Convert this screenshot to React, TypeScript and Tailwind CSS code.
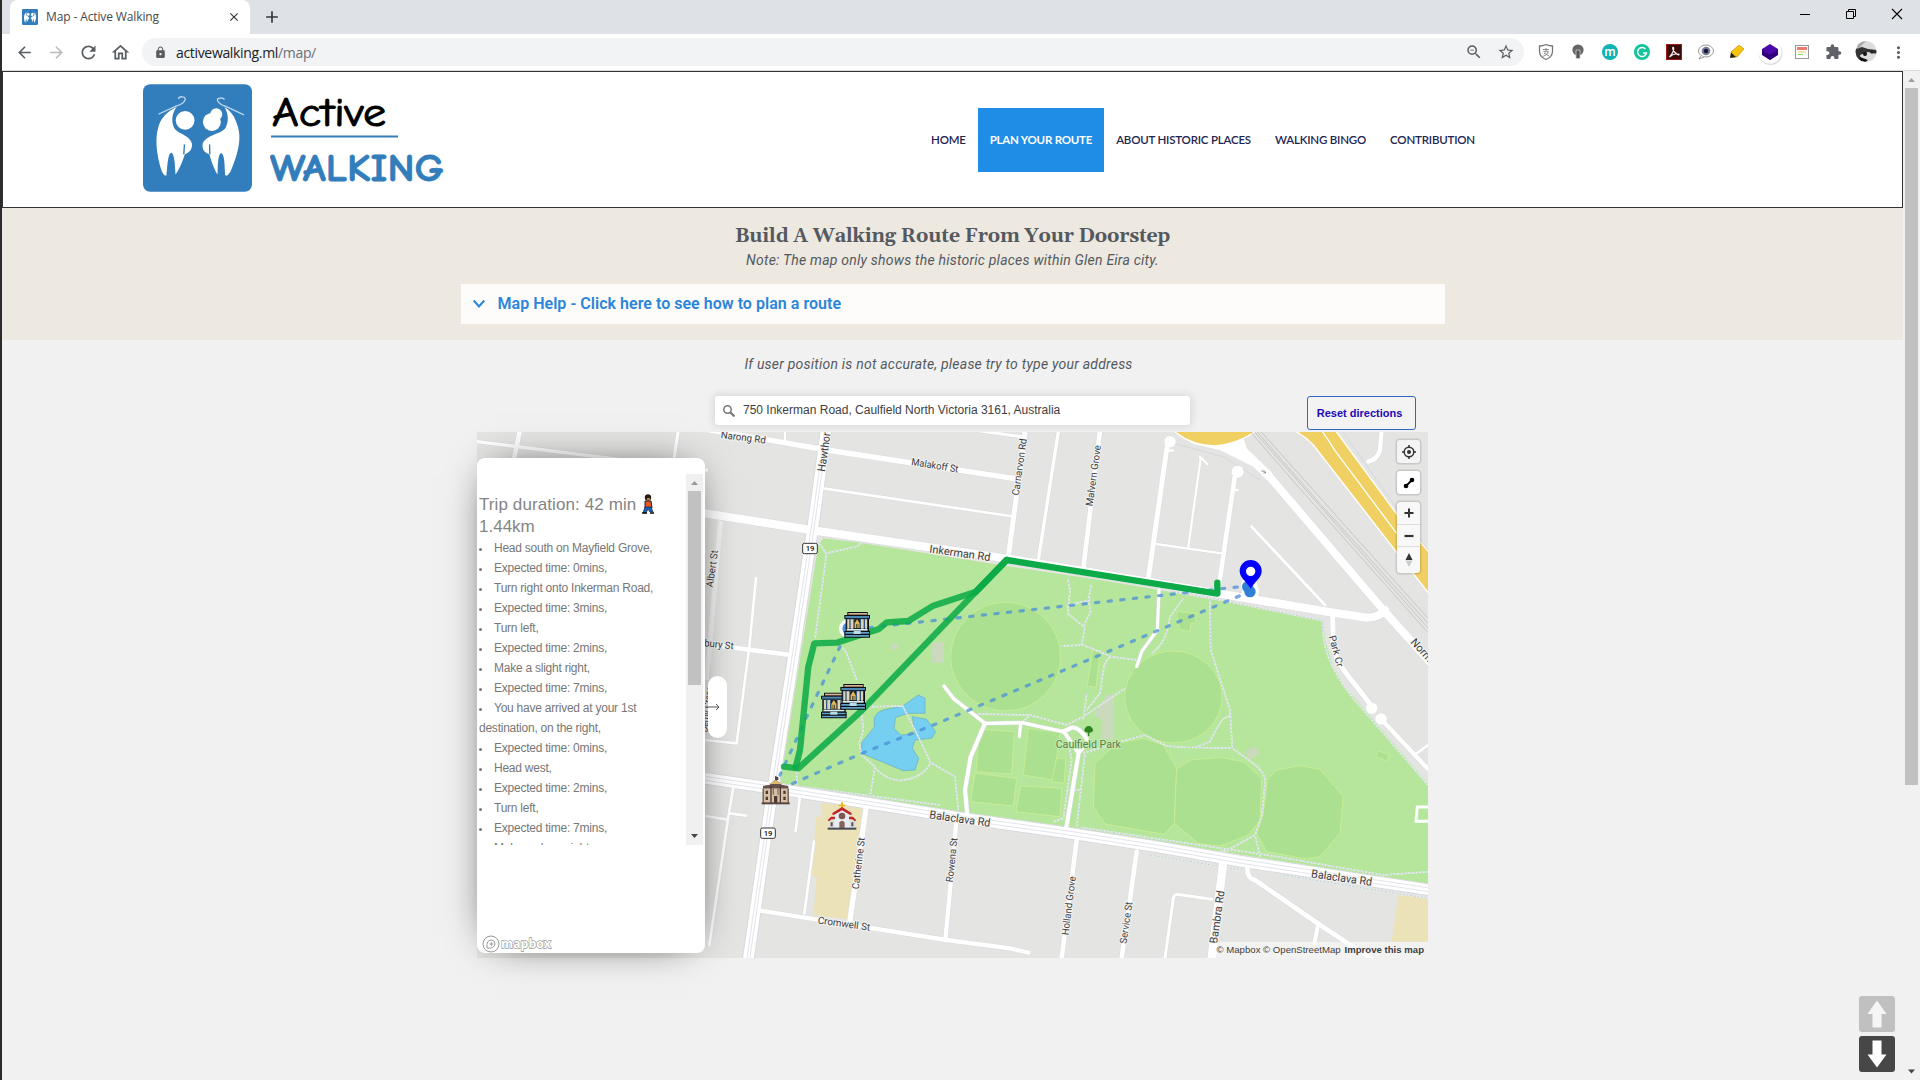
import React from "react";
import {
  MdArrowBack, MdArrowForward, MdRefresh, MdOutlineHome, MdLock, MdZoomOut, MdStarBorder,
  MdExtension, MdMoreVert, MdAdd, MdClose,
} from "react-icons/md";

function LogoMark({ className }: { className: string }) {
  return (
    <svg className={className} viewBox="0 0 326 322">
      <rect x="0" y="0" width="326" height="322" rx="22" fill="#327dbb" />
      <g fill="#fff">
        <circle cx="126" cy="108" r="28" />
        <circle cx="206" cy="113" r="27" />
        <circle cx="219" cy="90" r="18" />
        <path d="M101 68C86 86 84 112 93 130C104 150 145 152 147 182C145 200 136 205 125 210C118 232 108 256 97 270C96 240 94 206 84 204C73 210 73 250 70 273C62 276 54 258 50 240C40 200 36 160 46 128C52 104 72 80 101 68Z" />
        <path d="M243 68C256 86 257 112 247 130C235 150 181 152 178 182C178 200 186 205 199 210C204 232 214 256 223 270C224 240 224 208 234 206C246 212 243 250 246 273C256 276 264 258 270 240C286 200 294 160 284 128C276 100 266 82 243 68Z" />
      </g>
      <g fill="none" stroke="#bfd8ec" strokeWidth="4">
        <path d="M46 90L100 65C126 58 134 40 118 38C110 36 106 42 106 44" />
        <path d="M302 92L246 66C222 58 216 42 230 42C238 40 242 44 244 46" />
        <path d="M124 180L122 210M199 180L200 210" stroke="#327dbb" />
      </g>
    </svg>
  );
}

function BrowserChrome() {
  return (
    <div className="h-[70px] shrink-0 overflow-hidden bg-white font-['Open_Sans',sans-serif]">
      <div className="flex h-[34px] items-stretch bg-[#dee1e6] pl-2">
        <div className="flex w-[240px] items-center rounded-t-lg bg-white pl-3">
          <LogoMark className="h-4 w-4" />
          <span className="ml-2 w-[181px] text-[12px] tracking-[-0.12px] text-[#45494d]">Map - Active Walking</span>
          <MdClose className="size-[14px] text-[#33373b]" />
        </div>
        <MdAdd className="mt-[7px] ml-3 size-5 text-[#33373b]" />
        <div className="grow" />
        <div className="flex items-start pt-[6px] text-black">
          <svg className="mr-[30px] size-4" viewBox="0 0 16 16"><path d="M3 8.5H13" stroke="#000" /></svg>
          <svg className="mr-[30px] size-4" viewBox="0 0 16 16" fill="none" stroke="#000"><path d="M3.500 5.500h7v7h-7zM5.500 5V3.500h7v7H11" /></svg>
          <svg className="mr-[15px] size-4" viewBox="0 0 16 16"><path d="M3 3L13 13M13 3L3 13" stroke="#000" strokeWidth="1.1" /></svg>
        </div>
      </div>
      <div className="flex h-9 items-center pl-[13px] text-[#5a5e62]">
        <MdArrowBack className="size-[19px] shrink-0" />
        <MdArrowForward className="ml-[13px] size-[19px] shrink-0 text-[#b9bbbe]" />
        <MdRefresh className="ml-[12px] size-[21px] shrink-0" />
        <MdOutlineHome className="ml-[11px] size-[21px] shrink-0" />
        <div className="ml-[11px] flex h-7 w-[1382px] shrink-0 items-center rounded-full bg-[#f1f3f4] pl-3">
          <MdLock className="size-[13px]" />
          <span className="ml-[9px] text-[14px] tracking-[-0.33px] text-[#202124]">activewalking.ml<span className="text-[#6b6f74]">/map/</span></span>
          <span className="grow" />
          <MdZoomOut className="size-[18px]" />
          <MdStarBorder className="mr-[9px] ml-[14px] size-[18px]" />
        </div>
        <svg className="ml-3 h-[36px] w-[382px] shrink-0" viewBox="1536 34 382 36">
          <path d="M1546 44.500Q1549 46 1552.500 46V52Q1552 57 1546 59.500Q1540 57 1539.500 52V46Q1543 46 1546 44.500Z" fill="none" stroke="#777" strokeWidth="1.300" />
          <path d="M1543 49.500H1549M1546 48V51.500M1543.500 51.700H1548.500Q1547 55 1543 56.500M1544 53L1549 56" stroke="#888" fill="none" />
          <g transform="translate(-1 0)"><circle cx="1579" cy="50" r="5.600" fill="#666" /><path d="M1577 50H1581V58.500H1577Z" fill="#555" stroke="#ccc" strokeWidth=".8" /></g>
          <circle cx="1610" cy="52" r="8" fill="#12b3b5" /><text x="1610" y="56" textAnchor="middle" fontFamily="Open Sans" fontWeight="600" fontSize="12" fill="#fff">m</text>
          <circle cx="1642" cy="52" r="8" fill="#15c39a" />
          <path d="M1645.500 49A4.500 4.500 0 1 0 1646.500 53H1643" fill="none" stroke="#fff" strokeWidth="1.400" />
          <rect x="1666.500" y="44.500" width="15" height="15" fill="#3a0a08" stroke="#a11613" />
          <path d="M1669.500 57C1672 54 1674.500 50 1673.500 47.500C1672 46 1672 52 1678.500 55C1681 54 1675 52 1669.500 57Z" fill="none" stroke="#eee" strokeWidth="1.200" />
          <ellipse cx="1706" cy="51" rx="7.500" ry="6" fill="#fff" stroke="#999" /><path d="M1701 56L1699 59L1704 57" fill="#fff" stroke="#999" />
          <circle cx="1706" cy="51" r="4.300" fill="#777b93" /><circle cx="1706" cy="51" r="2.200" fill="#15153f" />
          <path d="M1731 52L1739 45L1744 49L1737 57L1731 57.500Z" fill="#f5c40c" stroke="#d08c10" strokeWidth=".7" /><path d="M1731 52.500L1736 57L1730 58Z" fill="#222" />
          <circle cx="1770.500" cy="53" r="12" fill="#dcdcdf" /><circle cx="1770" cy="52" r="11.500" fill="#fff" />
          <path d="M1762 49L1770 44L1778 49V51L1776 52L1778 53V55L1770 60L1762 55V53L1764 52L1762 51Z" fill="#4b0aa8" /><path d="M1762 50L1770 55L1778 50V54.500L1770 60L1762 54.500Z" fill="#2f007a" />
          <rect x="1795.500" y="45.500" width="13" height="13" fill="#fff" stroke="#999" /><rect x="1797" y="47" width="10" height="3" fill="#ee7b72" /><path d="M1798 52H1806" stroke="#e8c35c" /><path d="M1798 54.500H1803" stroke="#7ed957" />
          <g><clipPath id="avatar"><circle cx="1866" cy="51.500" r="10.500" /></clipPath>
            <g clipPath="url(#avatar)"><rect x="1855" y="41" width="22" height="22" fill="#dcdcdc" /><path d="M1855 49L1862 47L1868 49L1877 50V54L1868 52L1860 55L1862 63H1855Z" fill="#333" /><path d="M1855 41H1866L1858 49Z" fill="#aaa" /><circle cx="1865" cy="54" r="2" fill="#111" /><circle cx="1872" cy="52" r="1.700" fill="#222" /><path d="M1860 57L1868 60L1864 63H1859Z" fill="#111" /></g></g>
          <MdExtension x="1825" y="43.500" width="17" height="17" size={17} color="#5f6368" />
          <MdMoreVert x="1889" y="43" size={19} color="#5a5e62" />
        </svg>
      </div>
    </div>
  );
}

const NAV = ["HOME", "PLAN YOUR ROUTE", "ABOUT HISTORIC PLACES", "WALKING BINGO", "CONTRIBUTION"];

function Header() {
  return (
    <header className="flex h-[137px] shrink-0 items-start border border-[#333] bg-white">
      <LogoMark className="mt-3 ml-[140px] h-[108px] w-[109px]" />
      <svg className="mt-3 ml-[18px] h-[110px] w-[182px]" viewBox="0 0 182 110" fontFamily="Comic Neue, Comic Sans MS, Lato, sans-serif">
        <text x="2" y="42" fontSize="40" fontWeight="400" textLength="114" lengthAdjust="spacingAndGlyphs" stroke="#000" strokeWidth="1" strokeLinejoin="round">Active</text>
        <path d="M1 52.500H128" stroke="#327dbb" strokeWidth="2" />
        <text x="0" y="97" fontSize="39" fontWeight="700" textLength="174" lengthAdjust="spacingAndGlyphs" fill="#327dbb" stroke="#327dbb" strokeWidth=".8" strokeLinejoin="round">WALKING</text>
      </svg>
      <nav className="mt-9 ml-[467px] flex h-16 items-center font-['Lato',sans-serif] text-[11.5px] text-[#1d2550]">
        {NAV.map((n, i) => (
          <a key={n} className={i === 1 ? "flex h-full items-center bg-[#1f8ce6] px-3 font-bold whitespace-nowrap text-white tracking-[-0.23px]" : "flex h-full items-center px-3 font-semibold whitespace-nowrap tracking-[-0.2px]"}>{n}</a>
        ))}
      </nav>
    </header>
  );
}

const ROADS: [string, number][] = [
  ["M-669 35L-230 90L20 120", 10], ["M-540 0L-565 120", 14], ["M-65 0L-80 100", 10],
  ["M30 0L380 60L940 145", 16], ["M255 0V35", 7], ["M820 0L965 20", 9], ["M370 175L930 258", 8],
  ["M975 5L925 380", 15], ["M1075 5L1015 390", 10], ["M1200 0L1150 415", 14],
  ["M168 445L148 650L110 940L15 930", 8], ["M15 642L272 675", 14],
  ["M100 1072L85 1160L28 1545", 8], ["M15 1158L80 1168", 8], ["M90 1150L138 1157", 8],
  ["M300 1100L287 1203", 8], ["M342 1235L313 1450", 8],
  ["M182 1442L740 1530L930 1555L985 1568", 13], ["M498 1135L450 1470", 16], ["M768 1185L736 1530", 13],
  ["M1130 1230L1085 1584", 14], ["M1310 1265L1265 1584", 14], ["M1570 1295L1535 1584", 25],
  ["M1535 1408L1430 1393Q1420 1393 1418 1420L1395 1584", 9],
  ["M1642 1310Q1640 1345 1665 1350L1860 1485L2020 1590", 14], ["M1855 1480L1843 1540", 12],
  ["M1402 45L1345 445", 15], ["M1605 135L1555 480", 14], ["M1502 85L1465 350", 7], ["M1500 80L1522 102", 7],
  ["M1368 342L1565 370", 7], ["M1655 290L1875 525", 9], ["M1400 62H1418M1612 180H1602", 8],
  ["M1898 555L1900 640Q1905 690 1935 725L2020 835", 15], ["M2043 867L2184 1017", 13], ["M2150 970L2184 945", 8],
  ["M2045 0L2040 60Q2030 90 2005 95", 13], ["M1377 480L1372 600L1325 665L1310 710", 9],
  ["M732 768L760 805L855 880L965 878L1090 905", 10], ["M855 880L812 980L795 1080L803 1165", 12],
  ["M962 880L958 920", 9], ["M1090 905L1115 893Q1140 890 1165 935L1136 968L1097 1205", 12], ["M1092 905L1136 970", 11],
  ["M15 250L320 298L930 387L1555 490L1880 545L2000 563Q2040 562 2055 540", 25],
  ["M1700 130L2050 540L2200 708", 24],
];

const TRUNKS = ["M380 -10L343 260L270 750L215 1100L143 1600", "M15 1045L240 1078L780 1163L1100 1208L1380 1252L1630 1295L2190 1380"];

const FOOTPATHS = [
  "M355 335L378 370L470 350L490 335M380 370L345 625", "M425 650L440 670L470 750", "M485 850L490 900L478 940L485 975L525 1010L510 1100",
  "M500 830L608 828L645 900L692 998L765 1040L775 1140", "M692 998Q670 1045 600 1052Q560 1050 525 1015", "M1103 445L1110 480L1103 550L1150 590L1172 545L1165 510L1175 460M1103 525L1172 510M1155 590L1145 645M1085 648L1150 645L1235 680L1310 690",
  "M1235 680Q1215 685 1210 720L1200 790L1160 840M1355 670Q1400 640 1410 560L1450 505", "M1530 510L1532 660L1590 840L1597 955L1660 1000Q1700 1030 1695 1060L1685 1160L1665 1215L1580 1262L1450 1275", "M1665 1215L1680 1280",
  "M1597 955L1450 952L1400 948L1335 915L1270 932L1150 970", "M1597 857Q1570 855 1550 895L1530 935L1490 950", "M1420 485L1560 510L1868 572Q1860 700 1990 840L2184 1065",
  "M830 852L990 855L1100 885L1150 860L1275 775M990 855L965 880", "M1100 910L1115 990L1090 1165L1060 1175M1155 970L1130 1190M1105 1080H1140", "M1140 1192L1360 1225L1700 1275L2050 1335L2184 1325", "M290 1020V1070M1160 790L1150 870",
  "M240 1062L720 1125", "M1350 1275L1640 1322M1750 1335L2184 1405",
];

const PITCHES = [
  "M838 898L943 905L935 1032L828 1025Z", "M985 895L1080 908L1060 1050L970 1035Z", "M1070 985L1098 985L1092 1060L1055 1055Z",
  "M825 1030L950 1045L940 1128L812 1115Z", "M962 1068L1085 1075L1080 1160L948 1145Z", "M1178 662L1200 664L1188 772L1162 768Z",
  "M1430 545L1490 550L1485 580L1473 580L1470 605L1438 598Z",
  "M1185 1000L1250 940L1330 925L1390 945L1430 1015L1423 1180L1392 1213L1215 1182L1180 1130Z",
  "M1430 1018L1470 990L1560 982L1630 995L1685 1045L1680 1170L1645 1215L1560 1248L1495 1240L1423 1180Z",
  "M1702 1050L1730 1020L1800 1007L1860 1018L1930 1100L1920 1210L1860 1280L1820 1287L1700 1265L1670 1210L1690 1150Z",
  "M2035 963L2068 975L2060 993L2028 980Z",
];

// label text, centre x, centre y, angle, length, font size
const LABELS: [string, number, number, number, number, number][] = [
  ["Narong Rd", 130, 22, 7, 136, 30], ["Malakoff St", 705, 106, 9, 142, 30], ["Hawthor", 372, 66, -82, 118, 33],
  ["Carnarvon Rd", 958, 111, -82, 172, 30], ["Malvern Grove", 1180, 137, -82, 184, 30], ["Inkerman Rd", 780, 369, 8, 184, 33],
  ["Albert St", 36, 416, -82, 112, 30], ["bury St", 57, 643, 6, 88, 30], ["Caulfield Park", 1165, 942, 0, 196, 32],
  ["Balaclava Rd", 780, 1166, 8, 184, 34], ["Balaclava Rd", 1925, 1343, 8, 184, 34], ["Catherine St", 475, 1300, -83, 156, 30],
  ["Rowena St", 755, 1290, -84, 134, 30], ["Holland Grove", 1106, 1427, -83, 178, 30], ["Service St", 1278, 1478, -82, 126, 30],
  ["Bambra Rd", 1551, 1461, -82, 160, 33], ["Cromwell St", 432, 1481, 8, 158, 30], ["Park Cr", 1909, 663, 75, 96, 30], ["Norm", 2166, 660, 48, 82, 33],
  ["Derby Cresc", 20, 838, -83, 138, 30],
];

function Museum({ x, y }: { x: number; y: number }) {
  return (
    <g transform={`translate(${x} ${y})`}>
      <path d="M9 0H70V9H77V20H74V57H77V77H0V57H4V20H0V9H9Z" fill="#0c0d10" />
      <path d="M12 3H68V8H12Z" fill="#d9b596" /><path d="M3 12H74V18H3Z" fill="#4d88b5" />
      <path d="M7 20H70V49H7Z" fill="#35597c" />
      <path d="M9 22H15V50H9ZM19 22H27V50H19ZM50 22H58V50H50ZM62 22H68V50H62Z" fill="#ddd3b6" />
      <path d="M30 21H47V50H30Z" fill="#26241f" /><path d="M31 34L38.500 22L46 34V48H42V36H40V48H37V36H35V48H31Z" fill="#e2b955" />
      <path d="M7 51H70V56H7Z" fill="#d6edf3" /><path d="M3 60H74V65H3ZM3 69H74V74H3Z" fill="#5fa1c8" /><path d="M28 57H49V66H28Z" fill="#b9dce6" />
    </g>
  );
}

function CityMap() {
  return (
    <svg className="h-[526px] w-[951px]" viewBox="-669 6 2853 1578">
      <rect x="-669" y="6" width="2853" height="1578" fill="#e4e4e2" />
      <path d="M365 1120L490 1130L490 1180L445 1468L340 1455L350 1340L335 1335L348 1160L365 1160Z" fill="#ece2b8" />
      <path d="M2095 1395L2184 1405V1535H2075Z" fill="#ece2b8" />
      <path d="M370 325L480 338L920 408L1200 450L1555 510L1870 570L1875 630L1900 710L1935 770L2184 1060V1362L1630 1275L1080 1190L780 1145L240 1062L355 345Z" fill="#b5e69c" />
      <g fill="#aae08f" stroke="#cdee95" strokeWidth="2.500">
        <ellipse cx="917" cy="680" rx="165" ry="163" /><ellipse cx="1420" cy="801" rx="146" ry="138" />
        {PITCHES.map((d) => <path key={d} d={d} />)}
      </g>
      <path d="M695 637H732V698H695ZM574 640H592L596 654L582 660L572 654ZM1180 855L1220 795L1242 790V930L1202 925L1208 870ZM1635 965L1665 948L1680 970L1650 990Z" fill="#cbd9bd" />
      <path d="M485 938L524 890Q515 850 550 840L608 828L655 795L675 805V850L625 850L587 862L582 895L602 915L645 912L637 860L680 868L707 905L695 925L645 930L637 955L656 985L645 1020L610 1022L485 970Z" fill="#75cff0" stroke="#66a9c8" strokeWidth="2" />
      <g fill="none" stroke="#ecf3ee" strokeWidth="4.500">{FOOTPATHS.map((d) => <path key={d} d={d} />)}</g>
      <g fill="none" stroke="#c3ced6" strokeWidth="3" strokeDasharray="7 4">{FOOTPATHS.map((d) => <path key={d} d={d} />)}</g>
      <path d="M62 265L20 750" stroke="#f3f3f4" strokeWidth="14" />
      <g fill="none" stroke="#d9dade" strokeLinejoin="round">{ROADS.map(([d, w]) => <path key={d} d={d} strokeWidth={w + 3} />)}
        {TRUNKS.map((d) => <path key={d} d={d} strokeWidth="38" />)}</g>
      <path d="M1420 0L1480 42L1560 60L1660 110L1700 150L1718 130L1640 55L1625 6Z" fill="#fff" />
      <path d="M1420 40L1570 80L1680 150" stroke="#cdd1da" strokeWidth="2" fill="none" />
      <g fill="none" stroke="#fff" strokeLinejoin="round" strokeLinecap="round">{ROADS.map(([d, w]) => <path key={d} d={d} strokeWidth={w} />)}
        {TRUNKS.map((d) => <path key={d} d={d} strokeWidth="32" />)}</g>
      <g fill="none" stroke="#d5d7e2" strokeWidth="2">
        {TRUNKS.map((d) => <g key={d}><path d={d} transform="translate(5 -5)" /><path d={d} transform="translate(-5 5)" /></g>)}
      </g>
      <g fill="#fff"><circle cx="1410" cy="35" r="17" /><circle cx="1613" cy="125" r="18" /><circle cx="2015" cy="835" r="17" /><circle cx="2043" cy="867" r="17" /></g>
      <path d="M2190 1131H2152L2148 1174H2190" fill="none" stroke="#fff" strokeWidth="9" />
      <path d="M1683 122L1698 128M1690 120L1698 128L1690 130" stroke="#777" strokeWidth="2" fill="none" />
      <g fill="#f0d062" stroke="#fff" strokeWidth="4">
        <path d="M1418 0Q1470 46 1545 48Q1620 40 1672 0Z" />
        <path d="M1780 0Q1815 18 1840 45L2090 367L2190 495V370L2090 252L1905 0Z" />
        <path d="M1864 0Q1884 28 1905 62L2090 310" fill="none" />
      </g>
      <g fill="none" stroke="#b7b7b9" strokeWidth="2"><path d="M1652 6L1790 165L2184 608M1664 6L1804 165L2184 594M1684 6L1865 208L2184 565M1672 6L1850 210L2184 580" /></g>
      <path d="M1925 0L2090 235L2184 360" stroke="#cdd1e4" strokeWidth="2" fill="none" />
      <g fontFamily="Roboto, sans-serif" fontWeight="400" strokeWidth="6" strokeLinejoin="round" paintOrder="stroke">
        {LABELS.map(([t, x, y, a, len, s]) => (
          <text key={t + x} transform={`translate(${x} ${y}) rotate(${a})`} x={-len / 2} y={s * 0.35} fontSize={s} textLength={len} lengthAdjust="spacingAndGlyphs"
            fill={t === "Caulfield Park" ? "#5b7d50" : "#3c3c3f"} stroke={t === "Caulfield Park" ? "#c4ebb0" : "#f4f4f2"}>{t}</text>
        ))}
      </g>
      <g fill="#2d8420"><ellipse cx="1166" cy="900" rx="13" ry="8" /><ellipse cx="1166" cy="895" rx="9" ry="7" /><rect x="1164" y="900" width="4" height="18" /></g>
      {[[330, 356], [204, 1210]].map(([x, y]) => (
        <g key={x}><rect x={x - 22} y={y - 16} width="44" height="31" rx="5" fill="#fff" stroke="#333" strokeWidth="3" />
          <text x={x} y={y + 8} textAnchor="middle" fontFamily="Roboto" fontWeight="600" fontSize="23" fill="#222">19</text></g>
      ))}
      <g fill="none" stroke="#4a8fd8" strokeOpacity=".75" strokeWidth="9.500" strokeDasharray="10 28" strokeLinecap="round">
        <path d="M1612 471L470 597" /><path d="M1618 498L1200 675L705 883L490 968L270 1064" /><path d="M420 650L325 850L240 1035" />
      </g>
      <circle cx="446" cy="596" r="24" fill="#4a91e0" stroke="#fff" strokeWidth="10" />
      <g fill="none" stroke="#0dab47" strokeWidth="19" strokeLinejoin="round" strokeLinecap="round">
        <path d="M920 390L828 485L700 527L625 573L560 577L535 598L410 638L343 640L325 710L300 960L287 1012" strokeOpacity=".87" />
        <path d="M252 1010L295 1015L485 842L828 485L920 390" strokeOpacity=".87" />
        <path d="M828 485L920 390L1552 491V458" />
      </g>
      <Museum x={363} y={788} /><Museum x={421} y={762} /><Museum x={433} y={546} />
      <g transform="translate(185 1038)">
        <path d="M40 0L50 4V12H40Z" fill="#444" /><path d="M4 30L24 26L42 10L60 26L80 30V38H4Z" fill="#66504a" /><path d="M22 24L42 12L62 24Z" fill="#dcb877" />
        <path d="M3 38H81V82H3Z" fill="#d6c0a6" /><path d="M3 38H6V82H3ZM78 38H81V82H78ZM26 30H30V82H26ZM54 30H58V82H54Z" fill="#4d3a36" />
        <path d="M12 44H19V54H12ZM12 62H19V72H12ZM65 44H72V54H65ZM65 62H72V72H65ZM37 60H47V82H37Z" fill="#4d3832" />
        <path d="M33 36H37V56H33ZM47 36H51V56H47Z" fill="#8a7060" /><path d="M0 79H84V85H0Z" fill="#5a4540" />
      </g>
      <g transform="translate(383 1117)">
        <path d="M40 0H46V7H53V12H46V21H40V12H33V7H40Z" fill="#f2b71d" /><path d="M5 54H81V79H5Z" fill="#d8dfe5" /><path d="M20 34L43 21L66 34V79H20Z" fill="#e8edf1" />
        <path d="M14 32L43 14L72 32V37H66L43 24L20 37H14ZM0 54L10 43H22V51H12L4 57ZM86 54L76 43H64V51H74L82 57Z" fill="#c0272d" />
        <circle cx="43" cy="41" r="10" fill="#7b5750" /><path d="M35 79V60Q43 50 51 60V79Z" fill="#8a625a" /><path d="M9 60H15V72H9ZM71 60H77V72H71Z" fill="#5f5050" /><rect y="76" width="86" height="6" fill="#474b55" />
      </g>
      <circle cx="1648" cy="466" r="25" fill="#fff" /><circle cx="1651" cy="486" r="26" fill="#fff" />
      <circle cx="1643" cy="470" r="17" fill="#2f7fd6" /><circle cx="1650" cy="485" r="17" fill="#2f7fd6" />
      <path d="M1652 476C1640 455 1619 444 1619 423A33 33 0 0 1 1685 423C1685 444 1664 455 1652 476Z" fill="#00f" /><circle cx="1652" cy="424" r="14" fill="#fff" />
    </svg>
  );
}

const STEPS = [
  "Head south on Mayfield Grove,", "Expected time: 0mins,", "Turn right onto Inkerman Road,", "Expected time: 3mins,", "Turn left,", "Expected time: 2mins,",
  "Make a slight right,", "Expected time: 7mins,", "You have arrived at your 1st destination, on the right,", "Expected time: 0mins,", "Head west,",
  "Expected time: 2mins,", "Turn left,", "Expected time: 7mins,", "Make a sharp right,",
];

function DirectionsPanel() {
  return (
    <div className="absolute top-[26px] left-0 h-[495px] w-[228px] rounded-lg bg-white pt-4 shadow-[0_0_42px_-18px_#000] font-['Liberation_Sans',sans-serif] text-[#777]">
      <div className="flex h-[371px] w-[226px] overflow-hidden">
        <div className="w-[209px] pt-5 pl-[2px]">
          <div className="text-[17px] leading-[22px] text-[#858585]">
            <span className="tracking-[0.1px]">Trip duration: 42 min</span>
            <svg className="ml-[6px] inline h-5 w-3 align-[-4px]" viewBox="0 0 12 20">
              <circle cx="6" cy="3.500" r="3.200" fill="#2a1a10" /><path d="M5 4H8V7H5Z" fill="#b8794a" /><path d="M3 7H9L10 14H3Z" fill="#e2592a" stroke="#222" />
              <path d="M3 13H9L11 18H8L6 15L4 19H1Z" fill="#1563c0" stroke="#123" strokeWidth=".7" /><path d="M0 19H5M8 19H12" stroke="#111" strokeWidth="1.500" />
            </svg>
            <div>1.44km</div>
          </div>
          <ul className="text-[12px] leading-5 tracking-[-0.24px]">
            {STEPS.map((s, i) => (
              <li key={i} className="pr-6"><span className="mr-[12px] inline-block size-[3px] rounded-full bg-[#777] align-[1px]" />{s}</li>
            ))}
          </ul>
        </div>
        <div className="flex w-[17px] flex-col items-center bg-[#f0f0f0]">
          <svg className="h-[17px] w-[17px]" viewBox="0 0 17 17"><path d="M5 11L8.500 7L12 11Z" fill="#999" /></svg>
          <div className="h-[194px] w-[13px] bg-[#c1c1c1]" />
          <div className="grow" />
          <svg className="h-[17px] w-[17px]" viewBox="0 0 17 17"><path d="M5 6L8.500 10L12 6Z" fill="#444" /></svg>
        </div>
      </div>
      <svg className="mt-[89px] ml-[5px] h-[20px] w-[72px]" viewBox="0 0 72 20">
        <circle cx="9" cy="10" r="8" fill="#fff" stroke="#999" /><path d="M5 14Q4 6 9.500 6A4 4 0 0 1 13 10Q12 15 5 14Z" fill="#fff" stroke="#999" /><path d="M9.500 7.500L10.300 9.200L12 10L10.300 10.800L9.500 12.500L8.700 10.800L7 10L8.700 9.200Z" fill="#aaa" />
        <text x="19" y="14" fontFamily="Open Sans" fontWeight="700" fontSize="13" textLength="50" lengthAdjust="spacingAndGlyphs" fill="#fff" stroke="#999" strokeWidth="1.300" paintOrder="stroke">mapbox</text>
      </svg>
    </div>
  );
}

const CTRL = "flex w-[23px] items-center justify-center rounded-[3px] shadow-[0_0_0_1.5px_rgba(0,0,0,0.12)]";

function MapControls() {
  return (
    <div className="absolute top-2 right-2 flex flex-col gap-2">
      <div className={`${CTRL} h-[23px] bg-[#f4f4f4]`}>
        <svg className="size-[14px]" viewBox="0 0 14 14" fill="none" stroke="#333" strokeWidth="1.500"><circle cx="7" cy="7" r="4.800" /><circle cx="7" cy="7" r="2" fill="#333" stroke="none" /><path d="M7 0V2M7 12V14M0 7H2M12 7H14" /></svg>
      </div>
      <div className={`${CTRL} h-[23px] bg-white`}>
        <svg className="size-[12px]" viewBox="0 0 12 12"><path d="M3 9L9 3" stroke="#000" strokeWidth="1.800" /><circle cx="3" cy="9" r="2.300" /><circle cx="9" cy="3" r="2.300" /></svg>
      </div>
      <div className={`${CTRL} h-[71px] flex-col divide-y divide-[#ddd] bg-[#f8f8f8]`}>
        <div className="flex w-full grow items-center justify-center"><svg className="h-3 w-3" viewBox="0 0 12 12"><path d="M1.500 6H10.500M6 1.500V10.500" stroke="#333" strokeWidth="2" /></svg></div>
        <div className="flex w-full grow items-center justify-center"><svg className="h-3 w-3" viewBox="0 0 12 12"><path d="M1.500 6H10.500" stroke="#333" strokeWidth="2.200" /></svg></div>
        <div className="flex w-full grow items-center justify-center"><svg className="h-4 w-2" viewBox="0 0 8 16"><path d="M0.500 8L4 1L7.500 8Z" fill="#333" /><path d="M0.500 8.500L4 15L7.500 8.500Z" fill="#ccc" /></svg></div>
      </div>
    </div>
  );
}

export default function App() {
  return (
    <div className="h-[1080px] w-[1920px] overflow-hidden bg-[#2b2b2b] pl-[2px]">
      <div className="flex h-full flex-col bg-[#f1f1f1]">
        <BrowserChrome />
        <div className="flex grow border-t border-[#dcdcdc]">
          <main className="relative flex w-[1901px] flex-col">
            <Header />
            <section className="flex h-[132px] flex-col items-center bg-[#ede8e0] pt-[17px]">
              <h1 className="h-[25px] font-['Gelasio','Georgia','Liberation_Serif',serif] text-[19.5px] leading-6 font-bold tracking-[-0.15px] whitespace-nowrap text-[#54595f]">Build A Walking Route From Your Doorstep</h1>
              <p className="h-5 font-['Roboto',sans-serif] text-[14px] leading-5 tracking-[0.22px] whitespace-nowrap text-[#54595f] italic">Note: The map only shows the historic places within Glen Eira city.</p>
              <div className="mt-[14px] flex h-10 w-[984px] items-center bg-[#fdfcfa] pl-3 font-['Roboto',sans-serif] text-[#2a85db]">
                <svg className="h-3 w-3" viewBox="0 0 12 12"><path d="M0.800 2.500L6 8.500L11.200 2.500" fill="none" stroke="#2a85db" strokeWidth="2" /></svg>
                <span className="ml-[13px] text-[16px] font-semibold tracking-[0.03px]">Map Help - Click here to see how to plan a route</span>
              </div>
            </section>
            <p className="mt-[14px] h-5 pr-[28px] text-center font-['Roboto',sans-serif] text-[14px] leading-5 tracking-[0.22px] text-[#54595f] italic">If user position is not accurate, please try to type your address</p>
            <div className="mt-[22px] flex h-9 items-start pl-[713px] font-['Liberation_Sans',sans-serif]">
              <div className="flex h-[29px] w-[475px] items-center rounded-[3px] bg-white pl-2 shadow-[0_0_8px_2px_rgba(0,0,0,0.1)]">
                <svg className="size-3" viewBox="0 0 12 12" fill="none" stroke="#757575"><circle cx="4.500" cy="4.500" r="3.700" strokeWidth="1.500" /><path d="M7.300 7.300L11.500 11.500" strokeWidth="2" /></svg>
                <span className="ml-2 pb-[2px] text-[12px] text-[#404040]">750 Inkerman Road, Caulfield North Victoria 3161, Australia</span>
              </div>
              <button className="ml-[117px] h-[34px] w-[109px] rounded-[3px] border border-[#2f67c2] bg-[#f3f3f4] pr-1 text-[11px] font-bold whitespace-nowrap text-[#2109b5]">Reset directions</button>
            </div>
            <div className="relative ml-[475px] h-[526px] w-[951px]">
              <CityMap />
              <DirectionsPanel />
              <div className="absolute top-[244px] left-[231px] flex h-[62px] w-[19px] items-center rounded-[10px] bg-white">
                <svg className="ml-[-2px] h-3 w-4" viewBox="0 0 16 12" fill="none" stroke="#555"><path d="M0 6H13M10 3L13 6L10 9" /></svg>
              </div>
              <MapControls />
              <div className="absolute right-0 bottom-0 flex h-4 w-[213px] items-center justify-end bg-white/50 pr-1 font-['Liberation_Sans',sans-serif] text-[9.6px] whitespace-nowrap text-[#404040]">
                © Mapbox © OpenStreetMap <b className="ml-1">Improve this map</b>
              </div>
            </div>
            <div className="absolute right-2 bottom-2 flex flex-col gap-1">
              <div className="flex size-9 items-center justify-center rounded-[3px] bg-[#c0c0c0]"><svg className="h-7 w-5" viewBox="0 0 20 28"><path d="M10 .5L19.500 14H14.500V27.500H5.500V14H.5Z" fill="#f5f5f5" /></svg></div>
              <div className="flex size-9 items-center justify-center rounded-[3px] bg-[#474747]"><svg className="h-7 w-5" viewBox="0 0 20 28"><path d="M10 27.500L19.500 14.500H14.500V.5H5.500V14.500H.5Z" fill="#fff" /></svg></div>
            </div>
          </main>
          <div className="flex w-[17px] flex-col items-center bg-[#f1f1f1]">
            <svg className="size-[17px]" viewBox="0 0 17 17"><path d="M5 11L8.500 7L12 11Z" fill="#a0a0a0" /></svg>
            <div className="h-[697px] w-[13px] bg-[#c1c1c1]" />
            <div className="grow" />
            <svg className="size-[17px]" viewBox="0 0 17 17"><path d="M5 6.500L8.500 10.500L12 6.500Z" fill="#444" /></svg>
          </div>
        </div>
      </div>
    </div>
  );
}
